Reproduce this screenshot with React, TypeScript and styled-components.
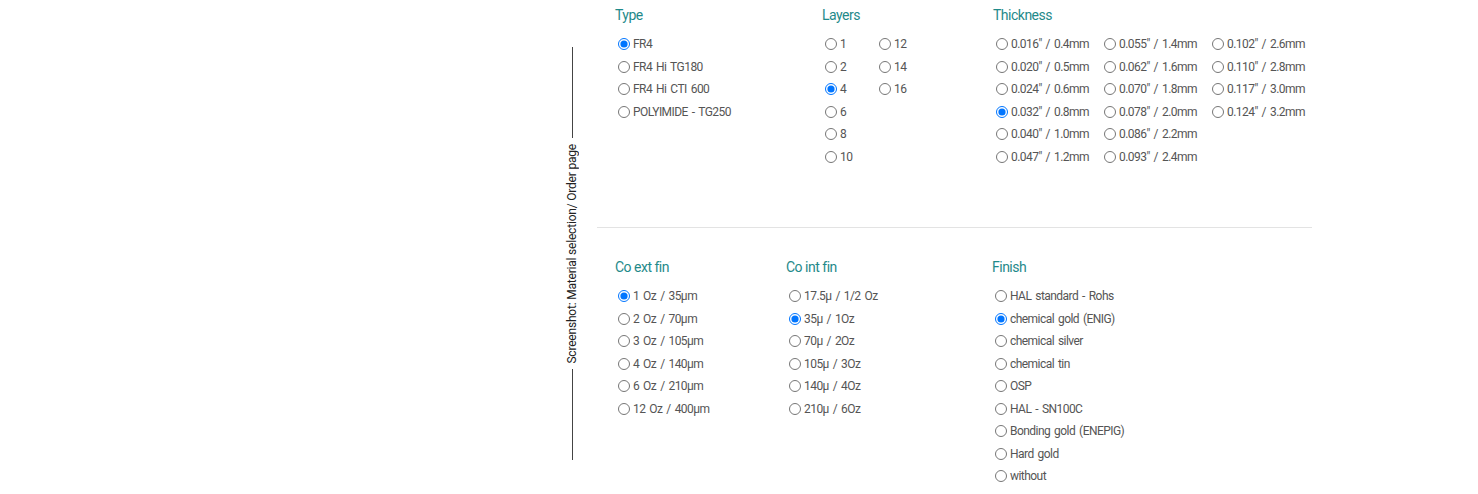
import React from "react";
import styled, { createGlobalStyle } from "styled-components";

type Group = {
  title: string;
  name: string;
  options: string[];
  checked: string;
  cols?: number;
  colWidth?: number;
};

const topGroups: Group[] = [
  {
    title: "Type",
    name: "type",
    options: ["FR4", "FR4 Hi TG180", "FR4 Hi CTI 600", "POLYIMIDE - TG250"],
    checked: "FR4",
  },
  {
    title: "Layers",
    name: "layers",
    options: ["1", "2", "4", "6", "8", "10", "12", "14", "16"],
    checked: "4",
    cols: 2,
    colWidth: 54,
  },
  {
    title: "Thickness",
    name: "thickness",
    options: [
      "0.016\" / 0.4mm",
      "0.020\" / 0.5mm",
      "0.024\" / 0.6mm",
      "0.032\" / 0.8mm",
      "0.040\" / 1.0mm",
      "0.047\" / 1.2mm",
      "0.055\" / 1.4mm",
      "0.062\" / 1.6mm",
      "0.070\" / 1.8mm",
      "0.078\" / 2.0mm",
      "0.086\" / 2.2mm",
      "0.093\" / 2.4mm",
      "0.102\" / 2.6mm",
      "0.110\" / 2.8mm",
      "0.117\" / 3.0mm",
      "0.124\" / 3.2mm",
    ],
    checked: "0.032\" / 0.8mm",
    cols: 3,
    colWidth: 108,
  },
];

const bottomGroups: Group[] = [
  {
    title: "Co ext fin",
    name: "coext",
    options: [
      "1 Oz / 35µm",
      "2 Oz / 70µm",
      "3 Oz / 105µm",
      "4 Oz / 140µm",
      "6 Oz / 210µm",
      "12 Oz / 400µm",
    ],
    checked: "1 Oz / 35µm",
  },
  {
    title: "Co int fin",
    name: "coint",
    options: [
      "17.5µ / 1/2 Oz",
      "35µ / 1Oz",
      "70µ / 2Oz",
      "105µ / 3Oz",
      "140µ / 4Oz",
      "210µ / 6Oz",
    ],
    checked: "35µ / 1Oz",
  },
  {
    title: "Finish",
    name: "finish",
    options: [
      "HAL standard - Rohs",
      "chemical gold (ENIG)",
      "chemical silver",
      "chemical tin",
      "OSP",
      "HAL - SN100C",
      "Bonding gold (ENEPIG)",
      "Hard gold",
      "without",
    ],
    checked: "chemical gold (ENIG)",
  },
];

const OptionGroup = ({ group }: { group: Group }) => (
  <Column>
    <Heading>{group.title}</Heading>
    <Options $cols={group.cols ?? 1} $colWidth={group.colWidth} $rows={group.cols ? 6 : group.options.length}>
      {group.options.map((opt) => (
        <Option key={opt}>
          <input type="radio" name={group.name} defaultChecked={opt === group.checked} />
          {opt}
        </Option>
      ))}
    </Options>
  </Column>
);

const App = () => {
  return (
    <>
      <GlobalStyle />
      <Page>
        <Caption>
          <CaptionLine />
          <CaptionText>Screenshot: Material selection/ Order page</CaptionText>
          <CaptionLine />
        </Caption>
        <Panel>
          <Section $cols="207px 171px auto" $bottom={59}>
            {topGroups.map((g) => (
              <OptionGroup key={g.name} group={g} />
            ))}
          </Section>
          <Divider />
          <Section $cols="171px 206px auto" $top={29} $bottom={0}>
            {bottomGroups.map((g) => (
              <OptionGroup key={g.name} group={g} />
            ))}
          </Section>
        </Panel>
      </Page>
    </>
  );
};

export default App;

const GlobalStyle = createGlobalStyle`
  body {
    margin: 0;
    background: #fff;
    font-family: Roboto, "Liberation Sans", sans-serif;
  }
`;

const Page = styled.div`
  display: flex;
  align-items: flex-start;
  padding-left: 562px;
`;

const Caption = styled.div`
  display: flex;
  flex-direction: column;
  align-items: center;
  width: 20px;
  height: 413px;
  margin-top: 47px;
`;

const CaptionLine = styled.div`
  flex: 1;
  width: 1px;
  background: #444;
`;

const CaptionText = styled.div`
  writing-mode: vertical-rl;
  transform: rotate(180deg);
  font-size: 12px;
  color: #222;
  letter-spacing: -0.2px;
  padding: 6px 0;
  white-space: nowrap;
`;

const Panel = styled.div`
  width: 715px;
  margin-left: 15px;
  padding-top: 5px;
`;

const Section = styled.div<{ $cols: string; $top?: number; $bottom: number }>`
  display: grid;
  grid-template-columns: ${(p) => p.$cols};
  padding: ${(p) => p.$top ?? 0}px 0 ${(p) => p.$bottom}px 16px;
`;

const Divider = styled.div`
  border-top: 1px solid #e3e3e3;
`;

const Column = styled.div`
  display: flex;
  flex-direction: column;
`;

const Heading = styled.div`
  color: #1f8a8a;
  font-size: 14px;
  font-weight: 400;
  letter-spacing: -0.5px;
  line-height: 20px;
  padding-left: 2px;
  margin-bottom: 8px;
`;

const Options = styled.div<{ $cols: number; $rows: number; $colWidth?: number }>`
  display: grid;
  grid-auto-flow: column;
  grid-template-rows: repeat(${(p) => p.$rows}, 22.5px);
  grid-template-columns: ${(p) => (p.$colWidth ? `repeat(${p.$cols}, ${p.$colWidth}px)` : "auto")};
`;

const Option = styled.label`
  display: flex;
  align-items: center;
  font-size: 12px;
  letter-spacing: -0.55px;
  word-spacing: 1.5px;
  color: #555;
  white-space: nowrap;

  input {
    margin: 0 3px 0 5px;
    width: 12px;
    height: 12px;
  }
`;
